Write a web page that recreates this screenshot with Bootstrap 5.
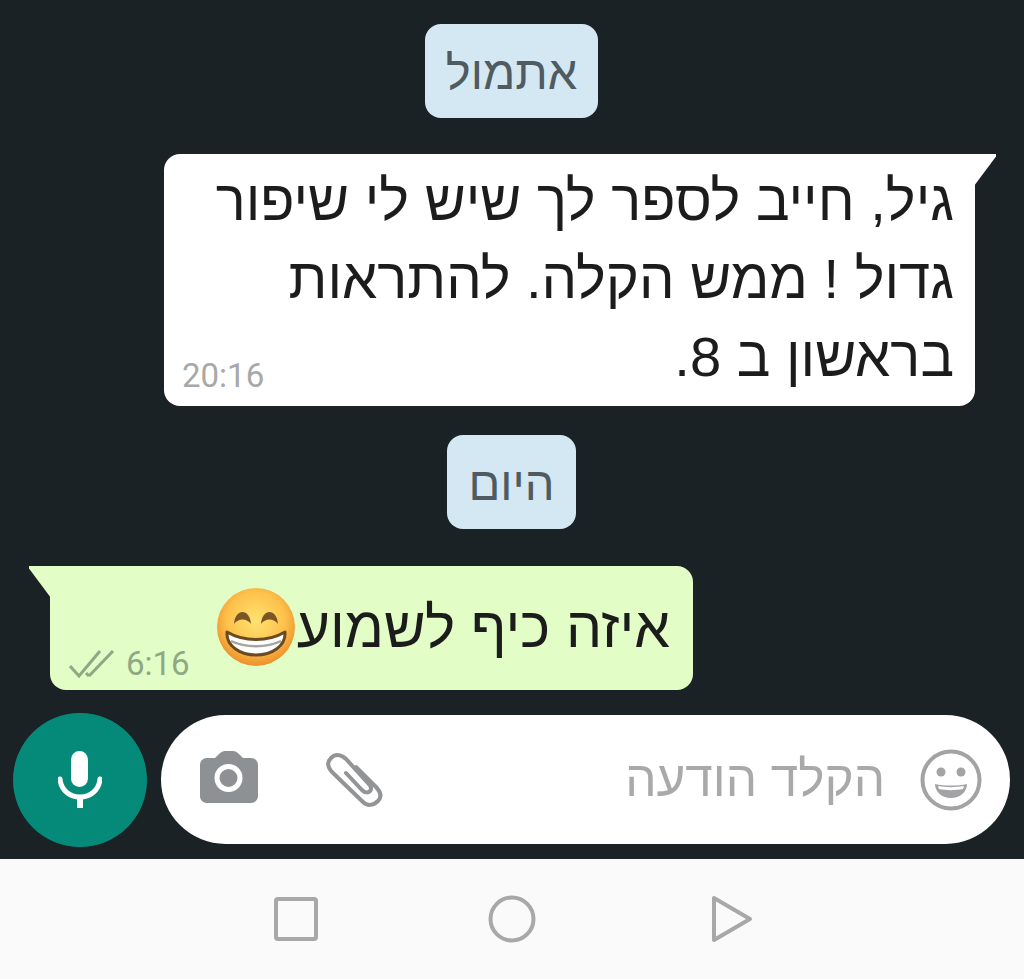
<!DOCTYPE html>
<html lang="he">
  <head>
    <meta charset="UTF-8" />
    <meta name="viewport" content="width=device-width, initial-scale=1.0" />
    <title>Chat</title>
    <link href="https://cdn.jsdelivr.net/npm/bootstrap@5.3.2/dist/css/bootstrap.min.css" rel="stylesheet" />
    <style>
      html, body { height: 979px; overflow: hidden; }
      body { background: #1a2225; font-family: "Liberation Sans", sans-serif; }
      .chat-area { height: 859px; padding: 24px 14px 12px 13px; }
      .day-chip { background: #d4e8f4; color: #505b61; font-size: 47px; line-height: 50px; height: 94px; border-radius: 16px; padding: 24px 21px 0; }
      .day-one { margin-bottom: 36px; }
      .day-two { margin: 29px 0 37px; }
      .bubble { position: relative; color: #1c1c1c; font-size: 56.200px; }
      .bubble::before { content: ""; position: absolute; top: 0; width: 22px; height: 32px; }
      .bubble-out { background: #fff; width: 811px; height: 252px; margin-left: 151px; margin-right: 35px; border-radius: 0 0 16px 16px; border-top-left-radius: 16px; padding: 8px 21px 0 0; line-height: 78px; }
      .bubble-out::before { right: -21px; background: #fff; clip-path: polygon(0 0, 100% 0, 100% 8%, 0 100%); }
      .bubble-in { background: #e2fdc6; width: 643px; height: 124px; margin-left: 37px; border-radius: 0 0 16px 16px; border-top-right-radius: 16px; padding: 21px 23px 0 0; line-height: 80px; font-size: 57px; }
      .bubble-in::before { left: -21px; background: #e2fdc6; clip-path: polygon(0 0, 100% 0, 100% 100%, 0 8%); }
      .msg-time { position: absolute; bottom: 10px; font-family: Roboto, sans-serif; font-size: 33px; line-height: 40px; color: #a8a8a8; }
      .bubble-out .msg-time { left: 18px; }
      .bubble-in .msg-time { left: 19px; color: #8fa884; display: flex; align-items: center; gap: 11px; bottom: 6px; }
      .msg-emoji { width: 80px; height: 80px; margin: -10px 1px 0 0; vertical-align: middle; }
      .input-row { margin-top: 23px; }
      .mic-btn { width: 134px; height: 134px; background: #058a7a; border-radius: 50%; flex-shrink: 0; }
      .msg-input { width: 849px; height: 129px; background: #fff; border-radius: 65px; margin: 0 0 1px 14px; padding: 0 28px 0 39px; }
      .input-hint { color: #a9a9a9; font-size: 49.500px; margin-right: 35px; white-space: nowrap; }
      .input-tools { gap: 68px; direction: ltr; margin-right: auto; }
      .cam-icon { margin-bottom: 5px; }
      .nav-strip { height: 120px; background: #fafafa; gap: 170px; padding-left: 3px; }
      .nav-back { margin-left: 5px; }
    </style>
  </head>
  <body>
    <div class="chat-area d-flex flex-column">
      <div class="d-flex justify-content-center">
        <div class="day-chip day-one" dir="rtl">אתמול</div>
      </div>
      <div class="bubble bubble-out" dir="rtl">
        גיל, חייב לספר לך שיש לי שיפור<br />גדול ! ממש הקלה. להתראות<br />בראשון ב 8.
        <span class="msg-time" dir="ltr">20:16</span>
      </div>
      <div class="d-flex justify-content-center">
        <div class="day-chip day-two" dir="rtl">היום</div>
      </div>
      <div class="bubble bubble-in" dir="rtl">
        איזה כיף לשמוע<svg class="msg-emoji" viewBox="0 0 80 80">
          <defs>
            <radialGradient id="faceFill" cx="50%" cy="42%" r="58%">
              <stop offset="0" stop-color="#ffe271" />
              <stop offset="0.65" stop-color="#fdc14a" />
              <stop offset="1" stop-color="#ec8f2c" />
            </radialGradient>
          </defs>
          <circle cx="40" cy="40" r="39" fill="url(#faceFill)" />
          <path d="M18 37c1-16 16-16 17 0-4-6-13-6-17 0zM45 37c1-16 16-16 17 0-4-6-13-6-17 0z" fill="#7a5526" />
          <path d="M11 45c17 10 41 10 58 0 1 14-13 23-29 23S10 59 11 45z" fill="#fff" stroke="#6b4a22" stroke-width="3" stroke-linejoin="round" />
          <path d="M15 54c14 7 36 7 50 0" fill="none" stroke="#a5a59e" stroke-width="2.500" />
        </svg>
        <span class="msg-time" dir="ltr">
          <svg width="46" height="30" viewBox="0 0 46 30" fill="none" stroke="#8fa884" stroke-width="3">
            <path d="M1 17l9 10L31 2M20 27L44 2M17 24l3 3" />
          </svg>
          6:16
        </span>
      </div>
      <div class="input-row d-flex align-items-center">
        <div class="mic-btn d-flex align-items-center justify-content-center">
          <svg width="44" height="58" viewBox="0 0 44 58">
            <rect x="13" y="0" width="17" height="36" rx="8.5" fill="#fff" />
            <path d="M2 28c2 24 38 24 40 0" fill="none" stroke="#fff" stroke-width="5" stroke-linecap="round" />
            <path d="M22 44v13" stroke="#fff" stroke-width="6" />
          </svg>
        </div>
        <div class="msg-input d-flex align-items-center" dir="rtl">
          <svg width="62" height="62" viewBox="0 0 62 62" class="flex-shrink-0">
            <circle cx="31" cy="31" r="28.5" fill="none" stroke="#a3a3a5" stroke-width="4" />
            <circle cx="21" cy="23" r="4.5" fill="#a3a3a5" />
            <circle cx="41" cy="23" r="4.5" fill="#a3a3a5" />
            <path d="M15 35c9 2 23 2 32 0 0 8-7 14-16 14S15 43 15 35z" fill="#a3a3a5" />
            <path d="M18 37c8 1.5 18 1.5 26 0l-1 3c-7 1.500-17 1.500-24 0z" fill="#fff" />
          </svg>
          <span class="input-hint">הקלד הודעה</span>
          <div class="input-tools d-flex align-items-center">
            <svg class="cam-icon" width="58" height="52" viewBox="0 0 58 52">
              <path d="M7 7h8l4-4c2-2 4-3 6-3h8c2 0 4 1 6 3l4 4h8c4 0 7 3 7 7v31c0 4-3 7-7 7H7c-4 0-7-3-7-7V14c0-4 3-7 7-7z" fill="#8e9193" />
              <circle cx="28.500" cy="27" r="11.500" fill="#8e9193" stroke="#fff" stroke-width="5" />
            </svg>
            <svg width="59" height="54" viewBox="0 0 59 54" fill="none" stroke="#929496" stroke-width="4" stroke-linecap="round">
              <path d="M30 14l19 19c5 5 8 10 3 15s-11 5-15 1L7 20C1 14 1 9 5 5s10-4 15 1l22 24c3 3 4 6 2 8s-5 2-8-1L20 20" />
            </svg>
          </div>
        </div>
      </div>
    </div>
    <div class="nav-strip d-flex align-items-center justify-content-center">
      <svg width="44" height="44" viewBox="0 0 44 44"><rect x="2" y="2" width="40" height="40" rx="2" fill="none" stroke="#a8a8a8" stroke-width="4" /></svg>
      <svg width="48" height="48" viewBox="0 0 48 48"><circle cx="24" cy="24" r="21.500" fill="none" stroke="#a8a8a8" stroke-width="4" /></svg>
      <svg class="nav-back" width="42" height="48" viewBox="0 0 42 48"><path d="M3 3v42l36-21z" fill="none" stroke="#a8a8a8" stroke-width="4" stroke-linejoin="round" /></svg>
    </div>
    <script src="https://cdn.jsdelivr.net/npm/bootstrap@5.3.2/dist/js/bootstrap.bundle.min.js"></script>
  </body>
</html>
